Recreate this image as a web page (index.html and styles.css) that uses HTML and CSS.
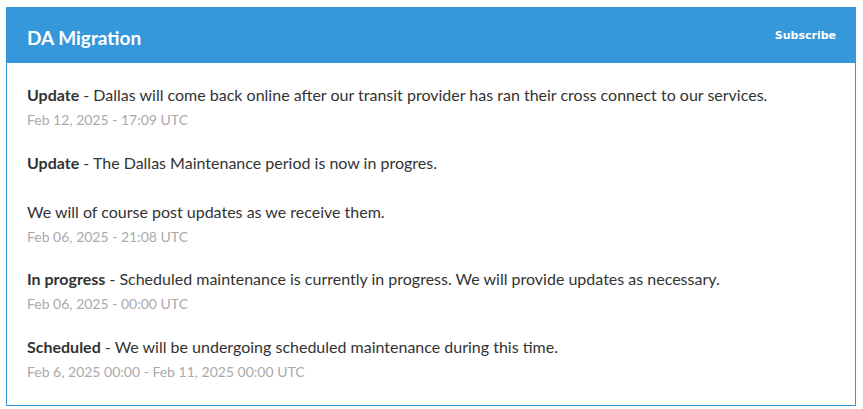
FILE: index.html
```html
<!DOCTYPE html>
<html lang="en">
<head>
    <meta charset="UTF-8">
    <title>DA Migration</title>
    <link rel="stylesheet" href="styles.css">
</head>
<body>
    <div class="incident">
        <div class="incident-header">
            <span class="incident-title">DA Migration</span>
            <a class="subscribe" href="#">Subscribe</a>
        </div>
        <div class="incident-body">
            <div class="update">
                <div class="update-text"><strong>Update</strong> - Dallas will come back online after our transit provider has ran their cross connect to our services.</div>
                <div class="update-date">Feb 12, 2025 - 17:09 UTC</div>
            </div>
            <div class="update">
                <div class="update-text"><strong>Update</strong> - The Dallas Maintenance period is now in progres.</div>
                <div class="update-text extra">We will of course post updates as we receive them.</div>
                <div class="update-date">Feb 06, 2025 - 21:08 UTC</div>
            </div>
            <div class="update">
                <div class="update-text"><strong>In progress</strong> - Scheduled maintenance is currently in progress. We will provide updates as necessary.</div>
                <div class="update-date">Feb 06, 2025 - 00:00 UTC</div>
            </div>
            <div class="update">
                <div class="update-text"><strong>Scheduled</strong> - We will be undergoing scheduled maintenance during this time.</div>
                <div class="update-date">Feb 6, 2025 00:00 - Feb 11, 2025 00:00 UTC</div>
            </div>
        </div>
    </div>
</body>
</html>
```

FILE: styles.css
```css
body {
    margin: 7px 7px 0 6px;
    font-family: Lato, "Open Sans", sans-serif;
    color: #333333;
    background-color: #ffffff;
}
.incident {
    border: 1px solid #3598db;
}
.incident-header {
    display: flex;
    align-items: center;
    justify-content: space-between;
    height: 56px;
    padding: 0 19px 0 20px;
    margin: -1px -1px 0 -1px;
    background-color: #3598db;
    color: #ffffff;
}
.incident-title {
    font-size: 19px;
    font-weight: 700;
    padding-left: 1px;
    margin-top: 5px;
}
.subscribe {
    color: #ffffff;
    font-family: "DejaVu Sans", Verdana, sans-serif;
    font-size: 11px;
    font-weight: 700;
    text-decoration: none;
    margin-right: 1px;
}
.incident-body {
    padding: 20px 20px 22px 20px;
}
.update {
    margin-bottom: 19.5px;
}
.update:last-child {
    margin-bottom: 0;
}
.update-text {
    font-size: 16px;
    line-height: 24.5px;
}
.update-text.extra {
    margin-top: 24.5px;
}
.update-text strong {
    font-weight: 700;
}
.update-date {
    margin-top: 1.5px;
    font-size: 14px;
    line-height: 22px;
    color: #aaaaaa;
}
```
